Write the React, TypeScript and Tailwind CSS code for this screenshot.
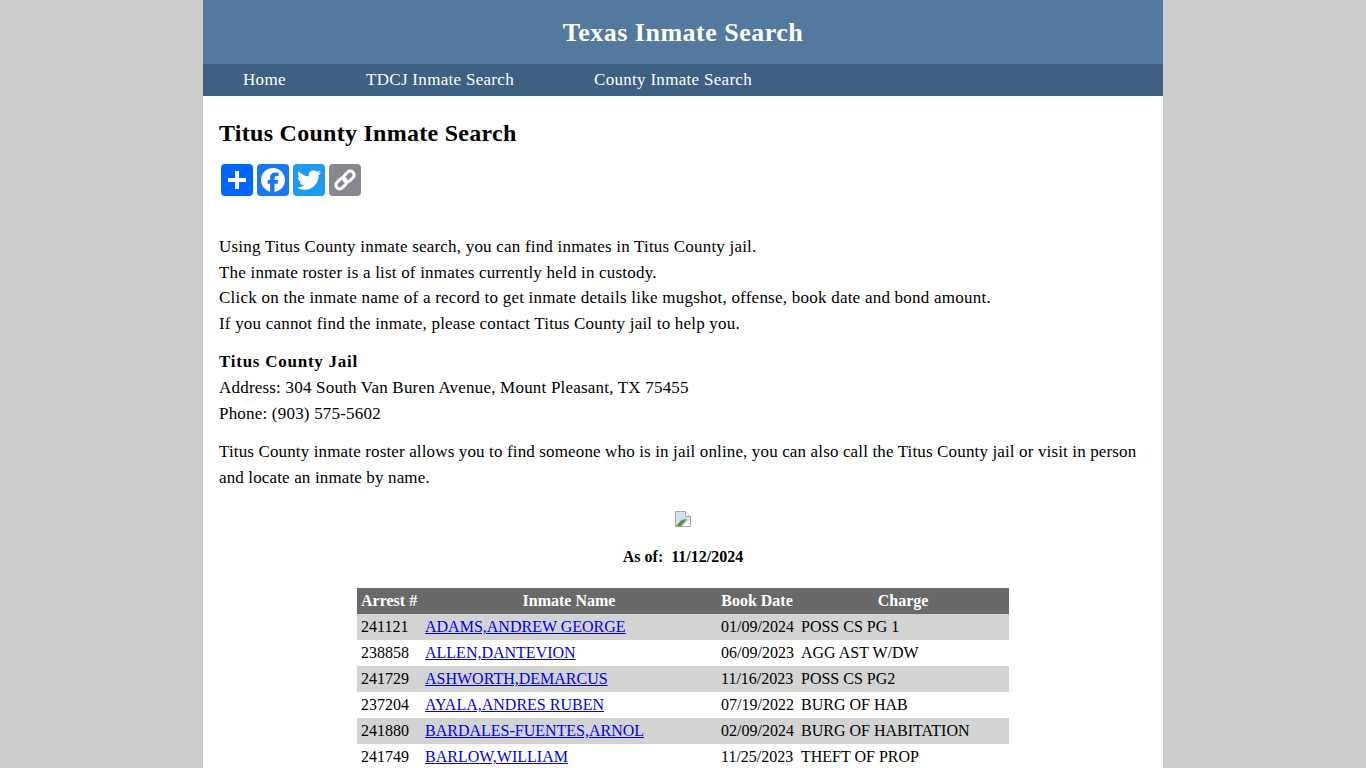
const navLinks = [
  { label: "Home", width: "w-[123px]" },
  { label: "TDCJ Inmate Search", width: "w-[228px]" },
  { label: "County Inmate Search", width: "w-[237px]" },
];

const inmates = [
  ["241121", "ADAMS,ANDREW GEORGE", "01/09/2024", "POSS CS PG 1"],
  ["238858", "ALLEN,DANTEVION", "06/09/2023", "AGG AST W/DW"],
  ["241729", "ASHWORTH,DEMARCUS", "11/16/2023", "POSS CS PG2"],
  ["237204", "AYALA,ANDRES RUBEN", "07/19/2022", "BURG OF HAB"],
  ["241880", "BARDALES-FUENTES,ARNOL", "02/09/2024", "BURG OF HABITATION"],
  ["241749", "BARLOW,WILLIAM", "11/25/2023", "THEFT OF PROP"],
];

function ShareIcons() {
  return (
    <div className="flex h-8 gap-1 pl-0.5">
      <a className="flex h-8 w-8 items-center justify-center rounded bg-[#0166ff]">
        <svg viewBox="0 0 32 32" className="h-8 w-8" fill="#fff">
          <path d="M14 7h4v7h7v4h-7v7h-4v-7H7v-4h7z" />
        </svg>
      </a>
      <a className="flex h-8 w-8 items-center justify-center rounded bg-[#1877f2]">
        <svg viewBox="0 0 32 32" className="h-8 w-8" fill="#fff">
          <path d="M28 16c0-6.627-5.373-12-12-12S4 9.373 4 16c0 5.628 3.875 10.35 9.101 11.647v-7.98h-2.474V16H13.1v-1.58c0-4.085 1.849-5.978 5.859-5.978.76 0 2.072.15 2.608.298v3.325c-.283-.03-.775-.045-1.386-.045-1.967 0-2.728.745-2.728 2.683V16h3.92l-.673 3.667h-3.247v8.245C23.395 27.195 28 22.135 28 16" />
        </svg>
      </a>
      <a className="flex h-8 w-8 items-center justify-center rounded bg-[#1d9bf0]">
        <svg viewBox="0 0 32 32" className="h-8 w-8" fill="#fff">
          <path d="M28 8.557a10 10 0 0 1-2.828.775 4.93 4.93 0 0 0 2.166-2.725 9.7 9.7 0 0 1-3.13 1.194 4.92 4.92 0 0 0-3.593-1.55 4.924 4.924 0 0 0-4.794 6.049c-4.09-.21-7.72-2.17-10.15-5.15a4.94 4.94 0 0 0-.665 2.477c0 1.71.87 3.214 2.19 4.1a5 5 0 0 1-2.23-.616v.06c0 2.39 1.7 4.38 3.952 4.83-.414.115-.85.174-1.297.174q-.476-.001-.928-.086a4.935 4.935 0 0 0 4.6 3.42 9.9 9.9 0 0 1-6.114 2.107q-.597 0-1.175-.068a13.95 13.95 0 0 0 7.55 2.213c9.056 0 14.01-7.507 14.01-14.013q0-.32-.015-.637c.96-.695 1.795-1.56 2.455-2.55z" />
        </svg>
      </a>
      <a className="flex h-8 w-8 items-center justify-center rounded bg-[#888990]">
        <svg viewBox="0 0 32 32" className="h-8 w-8" fill="none" stroke="#fff" strokeWidth="3">
          <rect x="16" y="6.5" width="7.5" height="12" rx="3.6" transform="rotate(45 19.75 12.5)" />
          <rect x="8.5" y="13.5" width="7.5" height="12" rx="3.6" transform="rotate(45 12.25 19.5)" />
        </svg>
      </a>
    </div>
  );
}

function BrokenImage() {
  return (
    <svg viewBox="0 0 16 16" className="h-4 w-4">
      <path d="M0.5 0.5H10.5L15.5 5.5V15.5H0.5Z" fill="#d5e0f3" stroke="#a8a8a8" />
      <path d="M10.5 0.5V5.5H15.5" fill="#fff" stroke="#a8a8a8" />
      <path d="M1 15L6 9.5C8 8.5 10 8 12 8.5L6 15Z" fill="#4f9a34" />
      <path d="M8 15L15 8.5V15Z" fill="#fff" />
    </svg>
  );
}

export default function App() {
  return (
    <div className="h-[768px] overflow-hidden bg-[#cccccc]">
      <div className="mx-auto h-full w-[960px] bg-white font-['Liberation_Serif',serif] text-black">
        <header className="flex h-16 items-center justify-center bg-[#53799f] text-[26px] font-bold tracking-[0.5px] text-white">
          Texas Inmate Search
        </header>
        <nav className="flex h-8 items-center bg-[#3d6083] pl-10 text-[17px] tracking-[0.3px] text-white">
          {navLinks.map((l) => (
            <a key={l.label} className={l.width}>
              {l.label}
            </a>
          ))}
        </nav>

        <main className="px-4">
          <h2 className="mt-[21px] text-[24px] leading-[32px] font-bold tracking-[0.27px]">
            Titus County Inmate Search
          </h2>
          <div className="mt-[15px]">
            <ShareIcons />
          </div>

          <div className="mt-[38px] text-[17px] leading-[25.6px] tracking-[0.2px]">
            <p>
              Using Titus County inmate search, you can find inmates in Titus County jail.
              <br />
              The inmate roster is a list of inmates currently held in custody.
              <br />
              <span className="tracking-[0.235px]">
                Click on the inmate name of a record to get inmate details like mugshot, offense, book date and bond amount.
              </span>
              <br />
              If you cannot find the inmate, please contact Titus County jail to help you.
            </p>
            <p className="mt-[13px]">
              <b className="tracking-[0.75px]">Titus County Jail</b>
              <br />
              Address: 304 South Van Buren Avenue, Mount Pleasant, TX 75455
              <br />
              Phone: (903) 575-5602
            </p>
            <p className="mt-[13px] tracking-[0.14px]">
              Titus County inmate roster allows you to find someone who is in jail online, you can also call the Titus County jail or visit in person and locate an inmate by name.
            </p>
          </div>

          <div className="mt-[21px] flex justify-center">
            <BrokenImage />
          </div>
          <p className="mt-[19px] text-center text-[16px] leading-[22px] font-bold">
            As of:&nbsp; 11/12/2024
          </p>

          <table className="mx-auto mt-[20px] w-[652px] table-fixed border-collapse text-[16px] leading-[26px]">
            <colgroup>
              <col className="w-[64px]" />
              <col className="w-[296px]" />
              <col className="w-[80px]" />
              <col className="w-[212px]" />
            </colgroup>
            <thead>
              <tr className="h-[26px] bg-[#696969] text-white">
                <th className="px-1 py-0 text-center font-bold whitespace-nowrap">Arrest #</th>
                <th className="px-1 py-0 text-center font-bold">Inmate Name</th>
                <th className="px-1 py-0 text-center font-bold whitespace-nowrap">Book Date</th>
                <th className="px-1 py-0 text-center font-bold">Charge</th>
              </tr>
            </thead>
            <tbody>
              {inmates.map((row, i) => (
                <tr key={row[0]} className={i % 2 === 0 ? "h-[26px] bg-[#d3d3d3]" : "h-[26px] bg-white"}>
                  <td className="px-1 py-0">{row[0]}</td>
                  <td className="px-1 py-0">
                    <a className="text-[#0000ee] underline">{row[1]}</a>
                  </td>
                  <td className="px-1 py-0">{row[2]}</td>
                  <td className="px-1 py-0">{row[3]}</td>
                </tr>
              ))}
            </tbody>
          </table>
        </main>
      </div>
    </div>
  );
}
